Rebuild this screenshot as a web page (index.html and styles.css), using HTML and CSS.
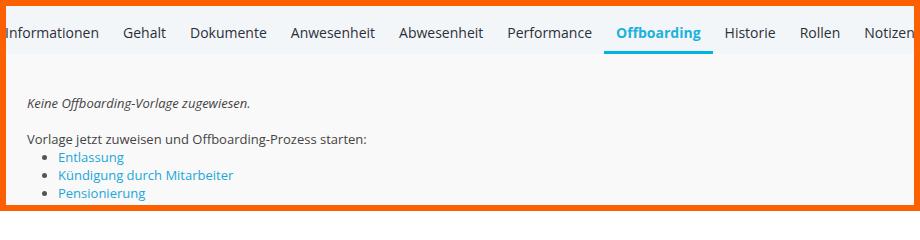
FILE: index.html
```html
<!DOCTYPE html>
<html lang="de">
<head>
<meta charset="utf-8">
<link rel="stylesheet" href="styles.css">
</head>
<body>
<div class="frame">
  <nav class="tabs">
    <a class="tab">Informationen</a>
    <a class="tab">Gehalt</a>
    <a class="tab">Dokumente</a>
    <a class="tab">Anwesenheit</a>
    <a class="tab">Abwesenheit</a>
    <a class="tab">Performance</a>
    <a class="tab active">Offboarding</a>
    <a class="tab">Historie</a>
    <a class="tab">Rollen</a>
    <a class="tab">Notizen</a>
  </nav>
  <section class="content">
    <p class="empty">Keine Offboarding-Vorlage zugewiesen.</p>
    <p class="lead">Vorlage jetzt zuweisen und Offboarding-Prozess starten:</p>
    <ul class="templates">
      <li><a>Entlassung</a></li>
      <li><a>Kündigung durch Mitarbeiter</a></li>
      <li><a>Pensionierung</a></li>
    </ul>
  </section>
</div>
</body>
</html>
```
FILE: styles.css
```css
html, body {
  margin: 0;
  padding: 0;
}
body {
  font-family: "Open Sans", "Liberation Sans", sans-serif;
  background: #ffffff;
}
.frame {
  box-sizing: border-box;
  width: 920px;
  height: 211px;
  border: 6px solid #fd6000;
  background: #f9f9f9;
  overflow: hidden;
}
.tabs {
  display: flex;
  white-space: nowrap;
  background: #f3f6f8;
  height: 48px;
  margin-left: -13px;
}
.tab {
  display: block;
  flex: none;
  padding: 17px 12px 11px;
  line-height: 20px;
  font-size: 14px;
  color: #2b2f3a;
}
.tab.active {
  color: #1bb1dd;
  font-weight: 700;
  padding-bottom: 8px;
  border-bottom: 3px solid #00b5dd;
}
.content {
  padding: 40px 21px 0;
  font-size: 13px;
  line-height: 18px;
  color: #444;
}
.content p {
  margin: 0;
}
.empty {
  font-style: italic;
}
.lead {
  margin-top: 18px !important;
}
.templates {
  margin: 0;
  padding-left: 31px;
}
.templates li {
  color: #555;
}
.templates a {
  color: #1ba7da;
}
```
